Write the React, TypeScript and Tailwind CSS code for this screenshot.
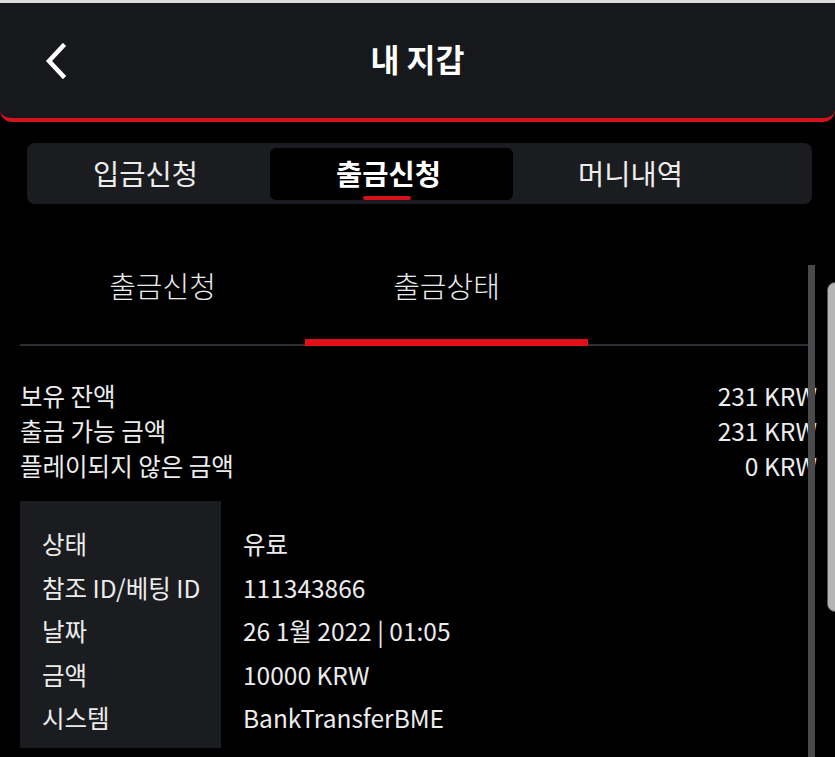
import React from "react";

const font = { fontFamily: '"Noto Sans CJK KR", "Noto Sans", sans-serif' };

export default function App() {
  const balances = [
    ["보유 잔액", "231 KRW"],
    ["출금 가능 금액", "231 KRW"],
    ["플레이되지 않은 금액", "0 KRW"],
  ];
  const details = [
    ["상태", "유료"],
    ["참조 ID/베팅 ID", "111343866"],
    ["날짜", "26 1월 2022 | 01:05"],
    ["금액", "10000 KRW"],
    ["시스템", "BankTransferBME"],
  ];
  return (
    <div
      className="relative w-[835px] h-[757px] overflow-hidden bg-black text-[#ececec]"
      style={font}
    >
      <div className="h-[3px] bg-[#dcdcdc]" />
      {/* header */}
      <div className="relative h-[119px] bg-[#17181b] rounded-b-[12px] border-b-[4px] border-[#d3121b] flex items-center justify-center">
        <button className="absolute left-[44px] top-[40px] w-[24px] h-[36px] flex items-center justify-center">
          <svg width="24" height="36" viewBox="0 0 24 36" fill="none">
            <path d="M19 3 L5 18 L19 33" stroke="#ffffff" strokeWidth="4.5" strokeLinecap="square" strokeLinejoin="miter" />
          </svg>
        </button>
        <div className="text-[31.5px] font-bold text-white leading-none -mt-[4px]">내 지갑</div>
      </div>

      {/* top tabs */}
      <div className="mt-[21px] ml-[27px] w-[785px] h-[61px] rounded-[8px] bg-[#1b1c20] flex items-center">
        <div className="w-[243px] h-[52px] flex items-center justify-center text-[28.5px] pr-[6px]">입금신청</div>
        <div className="relative w-[243px] h-[52px] rounded-[6px] bg-black flex items-center justify-center text-[28.5px] font-bold text-white pr-[6px]">
          출금신청
          <div className="absolute bottom-0 left-[93px] w-[48px] h-[4px] rounded-full bg-[#d3121b]" />
        </div>
        <div className="w-[243px] h-[52px] flex items-center justify-center text-[28.5px] pr-[8px]">머니내역</div>
      </div>

      {/* sub tabs */}
      <div className="mt-[38px] ml-[20px] w-[792px]">
        <div className="flex h-[104px] border-b-[2px] border-[#2e2f35]">
          <div className="w-[285px] flex items-start justify-center pt-[22px] text-[29px] font-light">출금신청</div>
          <div className="relative w-[283px] flex items-start justify-center pt-[22px] text-[29px] font-light">
            출금상태
            <div className="absolute -bottom-[2px] left-0 w-[283px] h-[7px] bg-[#e10f16]" />
          </div>
        </div>

        <div className="mt-[33px] flex flex-col">
          {balances.map(([l, v]) => (
            <div key={l} className="flex justify-between items-center h-[35px] text-[24.5px] w-[797px]">
              <span>{l}</span>
              <span>{v}</span>
            </div>
          ))}
        </div>

        <div className="mt-[17px] flex">
          <div className="w-[201px] h-[247px] bg-[#1b1c1f] pt-[22px] pl-[22px] flex flex-col">
            {details.map(([l]) => (
              <div key={l} className="h-[43.5px] flex items-center text-[24.5px] whitespace-nowrap">{l}</div>
            ))}
          </div>
          <div className="pt-[22px] pl-[22px] flex flex-col">
            {details.map(([l, v]) => (
              <div key={l} className="h-[43.5px] flex items-center text-[24.5px] whitespace-nowrap">{v}</div>
            ))}
          </div>
        </div>
      </div>

      {/* scrollbar */}
      <div className="absolute left-[808px] top-[265px] w-[7px] h-[492px] bg-[#4a4a4c]" />
      {/* side handle */}
      <div className="absolute left-[827px] top-[282px] w-[20px] h-[330px] rounded-[8px] bg-[#b4b4b4] border border-[#555]" />
    </div>
  );
}
